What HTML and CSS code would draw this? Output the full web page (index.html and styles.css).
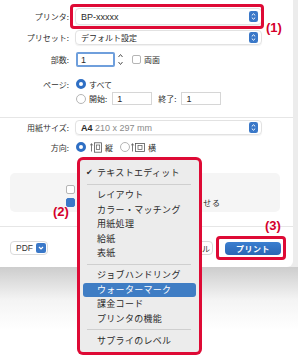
FILE: index.html
```html
<!DOCTYPE html>
<html lang="ja">
<head>
<meta charset="utf-8">
<link rel="stylesheet" href="styles.css">
</head>
<body>
<div class="screen">
  <div class="dialog">
    <div class="row r1">
      <span class="label">プリンタ:</span>
      <div class="popup"><span class="val latin">BP-xxxxx</span>
        <svg class="pop-icon" viewBox="0 0 9 11"><rect width="9" height="11" rx="2.2" fill="#3a78c8"/><path d="M2.8 4.4 L4.5 2.8 L6.2 4.4 M2.8 6.6 L4.5 8.2 L6.2 6.6" fill="none" stroke="#fff" stroke-width="1"/></svg>
      </div>
    </div>
    <div class="row r2">
      <span class="label">プリセット:</span>
      <div class="popup"><span class="val">デフォルト設定</span>
        <svg class="pop-icon" viewBox="0 0 9 11"><rect width="9" height="11" rx="2.2" fill="#3a78c8"/><path d="M2.8 4.4 L4.5 2.8 L6.2 4.4 M2.8 6.6 L4.5 8.2 L6.2 6.6" fill="none" stroke="#fff" stroke-width="1"/></svg>
      </div>
    </div>
    <div class="row r3">
      <span class="label">部数:</span>
      <div class="num focus latin">1</div>
      <svg class="stepper" viewBox="0 0 9 17"><path d="M2.5 6 L4.5 3.5 L6.5 6 M2.5 11 L4.5 13.5 L6.5 11" fill="none" stroke="#555" stroke-width="1"/></svg>
      <span class="check dup"></span><span class="txt">両面</span>
    </div>
    <div class="row r4">
      <span class="label">ページ:</span>
      <span class="radio on"></span><span class="txt">すべて</span>
    </div>
    <div class="row r5">
      <span class="label"></span>
      <span class="radio"></span><span class="txt">開始:</span>
      <div class="num small latin">1</div>
      <span class="txt end">終了:</span>
      <div class="num small latin">1</div>
    </div>
    <div class="sep"></div>
    <div class="row r6">
      <span class="label">用紙サイズ:</span>
      <div class="popup"><span class="val latin"><b>A4</b> <span class="dim">210 x 297 mm</span></span>
        <svg class="pop-icon" viewBox="0 0 9 11"><rect width="9" height="11" rx="2.2" fill="#3a78c8"/><path d="M2.8 4.4 L4.5 2.8 L6.2 4.4 M2.8 6.6 L4.5 8.2 L6.2 6.6" fill="none" stroke="#fff" stroke-width="1"/></svg>
      </div>
    </div>
    <div class="row r7">
      <span class="label">方向:</span>
      <span class="radio on"></span>
      <svg class="orient" viewBox="0 0 12 11"><path d="M1.5 9.5 V2 M0.3 3.4 L1.5 1.6 L2.7 3.4" fill="none" stroke="#555" stroke-width="0.8"/><rect x="4.5" y="0.8" width="7" height="9.4" fill="none" stroke="#555" stroke-width="0.8"/><rect x="6.3" y="3" width="3.4" height="4.5" fill="none" stroke="#555" stroke-width="0.7"/></svg>
      <span class="txt">縦</span>
      <span class="radio second"></span>
      <svg class="orient land" viewBox="0 0 14 11"><path d="M1.5 9.5 V2 M0.3 3.4 L1.5 1.6 L2.7 3.4" fill="none" stroke="#555" stroke-width="0.8"/><rect x="4.5" y="1.5" width="9" height="8" fill="none" stroke="#555" stroke-width="0.8"/><rect x="7" y="3.4" width="4" height="4.2" fill="none" stroke="#555" stroke-width="0.7"/></svg>
      <span class="txt">横</span>
    </div>
    <div class="panel">
      <div class="opt"><span class="check"></span><span class="txt">ヘッダとフッタをプリント</span></div>
      <div class="opt"><span class="check on"></span><span class="txt wide">内容を折り返してページに合わせる</span></div>
    </div>
    <div class="sep sep2"></div>
    <div class="buttons">
      <div class="pdf latin">PDF
        <svg class="pdf-chev" viewBox="0 0 10 10"><rect width="10" height="10" rx="2" fill="#3a78c8"/><path d="M3 4 L5 6 L7 4" fill="none" stroke="#fff" stroke-width="1.2"/></svg>
      </div>
      <div class="spacer"></div>
      <div class="btn cancel">キャンセル</div>
      <div class="btn print">プリント</div>
    </div>
  </div>

  <div class="menu">
    <div class="item"><span class="tick">✔</span>テキストエディット</div>
    <div class="msep"></div>
    <div class="item">レイアウト</div>
    <div class="item">カラー・マッチング</div>
    <div class="item">用紙処理</div>
    <div class="item">給紙</div>
    <div class="item">表紙</div>
    <div class="msep"></div>
    <div class="item">ジョブハンドリング</div>
    <div class="item sel">ウォーターマーク</div>
    <div class="item">課金コード</div>
    <div class="item">プリンタの機能</div>
    <div class="msep"></div>
    <div class="item">サプライのレベル</div>
  </div>

  <div class="callout c1"></div>
  <div class="callout c3"></div>
  <span class="tag t1">(1)</span>
  <span class="tag t2">(2)</span>
  <span class="tag t3">(3)</span>
</div>
</body>
</html>
```

FILE: styles.css
```css
* { box-sizing: border-box; }
html, body {
  margin: 0;
  padding: 0;
}
body {
  width: 298px;
  height: 357px;
  overflow: hidden;
  background: linear-gradient(to bottom, #ececec 0, #ececec 267px, #cdcdcd 267px, #f4f4f4 300px, #fff 330px);
  font-family: "Noto Sans CJK JP", "Liberation Sans", sans-serif;
  color: #2a2a2a;
}
.latin { font-family: "Liberation Sans", "Noto Sans CJK JP", sans-serif; }
.screen { position: relative; width: 298px; height: 357px; }

.dialog {
  width: 293px;
  height: 267px;
  background: #fff;
  border-bottom-right-radius: 6px;
  padding-top: 8px;
  font-size: 8px;
  display: flex;
  flex-direction: column;
}

.row {
  display: flex;
  align-items: center;
  flex-shrink: 0;
}
.label {
  width: 70px;
  text-align: right;
  padding-right: 1px;
  margin-right: 5px;
  color: #333;
  flex-shrink: 0;
}
.txt { color: #2a2a2a; }

.r1 { height: 17px; }
.r2 { height: 15px; margin-top: 5px; }
.r3 { height: 17px; margin-top: 6px; }
.r4 { height: 12px; margin-top: 10px; }
.r5 { height: 15px; margin-top: 1px; }
.r6 { height: 15px; margin-top: 2px; }
.r7 { height: 12px; margin-top: 6px; }

.popup {
  width: 187px;
  height: 100%;
  border: 1px solid #e2e2e2;
  border-radius: 4px;
  box-shadow: 0 1px 1px rgba(0,0,0,0.06);
  display: flex;
  align-items: center;
  padding: 0 3px 0 5px;
}
.val { flex: 1; font-size: 8px; }
.val.latin { font-size: 9px; }
.dim { color: #8a8a8a; }
.pop-icon { width: 9px; height: 11px; }

.num {
  height: 13px;
  border: 1px solid #d6d6d6;
  font-size: 9px;
  display: flex;
  align-items: center;
  padding-left: 4px;
  background: #fff;
}
.num.focus {
  width: 39px;
  height: 15px;
  margin-left: 1px;
  border: 2px solid #6f9fdc;
  border-radius: 2px;
  padding-left: 3px;
}
.num.small { width: 40px; margin-left: 5px; }
.stepper { width: 9px; height: 17px; margin-left: 1px; }
.check {
  width: 9px;
  height: 9px;
  border: 1px solid #b5b5b5;
  border-radius: 2px;
  background: #fff;
  display: inline-block;
  flex-shrink: 0;
}
.check.dup { margin-left: 7px; margin-right: 3px; }
.check.on {
  background: #3a78c8;
  border-color: #3a78c8;
}

.radio {
  width: 10px;
  height: 10px;
  border-radius: 50%;
  border: 1px solid #b5b5b5;
  background: #fff;
  margin-left: 1px;
  margin-right: 3px;
  flex-shrink: 0;
}
.radio.on {
  border: 3px solid #2f6fc4;
}
.radio.second { margin-left: 7px; margin-right: 0; }
.txt.end { margin-left: 6px; }

.orient { width: 12px; height: 11px; margin: 0 3px 0 1px; }
.orient.land { width: 14px; margin-left: 1px; }

.sep {
  height: 1px;
  background: #e6e6e6;
  margin-top: 11px;
  flex-shrink: 0;
}
.sep2 { margin-top: 14px; }

.panel {
  margin: 20px 13px 0 10px;
  height: 39px;
  background: #f5f5f5;
  border-radius: 5px;
  padding: 12px 0 0 56px;
  display: flex;
  flex-direction: column;
  gap: 4px;
  flex-shrink: 0;
}
.opt { display: flex; align-items: center; height: 9px; }
.opt .txt { margin-left: 4px; white-space: nowrap; }
.opt .txt.wide { letter-spacing: 0.9px; }

.buttons {
  margin-top: 14px;
  height: 14px;
  display: flex;
  align-items: center;
  padding: 0 12px 0 10px;
}
.pdf {
  width: 38px;
  height: 14px;
  border: 1px solid #dadada;
  border-radius: 4px;
  font-size: 8.5px;
  display: flex;
  align-items: center;
  justify-content: space-between;
  padding: 0 1px 0 5px;
  color: #333;
}
.pdf-chev { width: 10px; height: 10px; }
.spacer { flex: 1; }
.btn {
  height: 14px;
  border-radius: 4px;
  display: flex;
  align-items: center;
  justify-content: center;
  font-size: 8px;
}
.cancel {
  width: 46px;
  border: 1px solid #dadada;
  color: #333;
  margin-right: 12px;
}
.print {
  width: 56px;
  height: 13px;
  background: linear-gradient(#3b7fd0, #2a66b4);
  color: #fff;
  font-weight: bold;
  letter-spacing: 0.5px;
}

.menu {
  position: absolute;
  left: 80px;
  top: 160px;
  width: 119px;
  height: 192px;
  background: #ececec;
  border-radius: 3px;
  box-shadow: 0 0 0 3px #de0a35;
  padding-top: 6px;
  font-size: 9px;
  color: #2a2a2a;
}
.item {
  height: 14.5px;
  line-height: 14.5px;
  padding-left: 17px;
  position: relative;
  margin: 0;
  border-radius: 3px;
  white-space: nowrap;
  letter-spacing: 0.3px;
}
.item.sel { margin: 0 3px; padding-left: 14px; background: #3f7dc4; color: #fff; }
.tick { position: absolute; left: 6px; top: 0; font-family: "DejaVu Sans", sans-serif; font-size: 8px; }
.msep {
  height: 7.5px;
  position: relative;
}
.msep::after {
  content: "";
  position: absolute;
  left: 7px;
  right: 8px;
  top: 3px;
  height: 1px;
  background: #cfcfcf;
}

.callout {
  position: absolute;
  border: 3px solid #de0a35;
  border-radius: 4px;
}
.c1 { left: 70px; top: 4px; width: 194px; height: 25px; }
.c3 { left: 216px; top: 236px; width: 70px; height: 24px; }
.tag {
  position: absolute;
  font-family: "Liberation Sans", sans-serif;
  font-weight: bold;
  font-size: 13px;
  color: #d4002c;
  line-height: 1;
}
.t1 { left: 266px; top: 21px; }
.t2 { left: 53px; top: 205px; }
.t3 { left: 265px; top: 219px; }
```
